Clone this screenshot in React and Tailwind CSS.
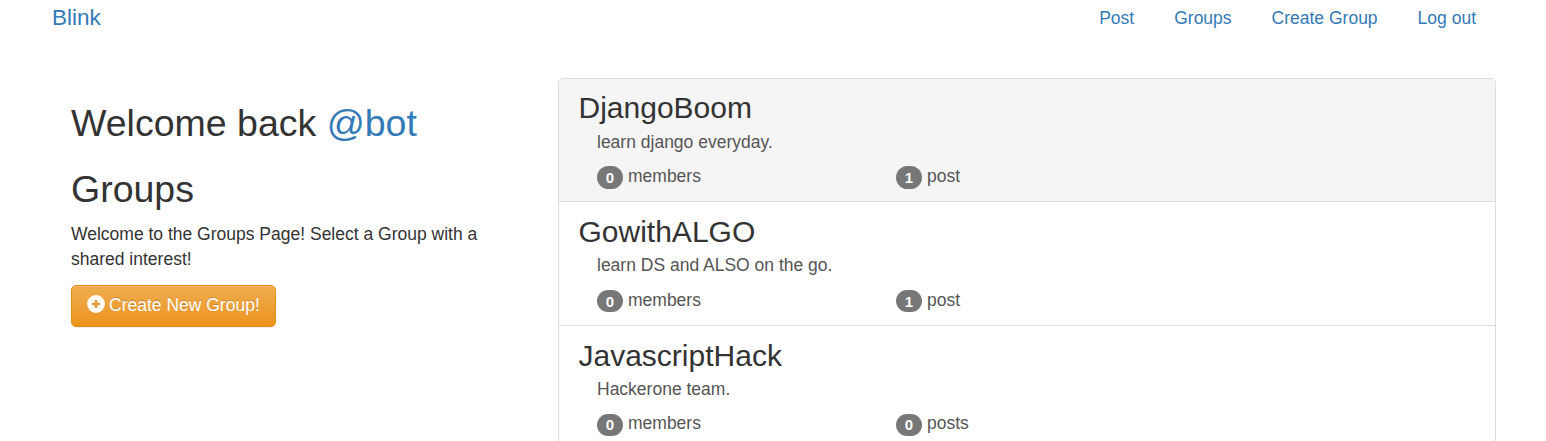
const groups = [
  {
    name: "DjangoBoom", text: "learn django everyday.", members: 0, posts: 1, word: "post",
    box: "h-[123px] bg-[#f5f5f5] pt-[12px]", body: "mt-[6px]", counts: "mt-[10px]", label: "-top-px", badge: "h-[23px]",
  },
  {
    name: "GowithALGO", text: "learn DS and ALSO on the go.", members: 0, posts: 1, word: "post",
    box: "h-[124px] bg-white pt-[13px]", body: "mt-[5px]", counts: "mt-[11px]", label: "-top-px", badge: "h-[22px]",
  },
  {
    name: "JavascriptHack", text: "Hackerone team.", members: 0, posts: 0, word: "posts",
    box: "h-[124px] bg-white pt-[13px]", body: "mt-[5px]", counts: "mt-[11px]", label: "-top-0.5", badge: "h-[22px] pb-px",
  },
];

function Count({ value, label, offset, badge, className = "" }) {
  return (
    <div className={"flex items-start " + className}>
      <span className={"mr-[5px] mt-px inline-flex w-[26px] items-center justify-center rounded-[12px] bg-[#777] text-[15px] font-bold leading-none text-white " + badge}>
        {value}
      </span>
      <span className={"relative leading-[25px] " + offset}>{label}</span>
    </div>
  );
}

function Group({ group }) {
  return (
    <a className={"block border-b border-[#ddd] px-[19.5px] text-[#555] " + group.box}>
      <h3 className="text-[30px] leading-[33px] text-[#333]">{group.name}</h3>
      <div className={"ml-[18.5px] " + group.body}>
        <p className="leading-[25px]">{group.text}</p>
        <div className={"flex h-[25px] " + group.counts}>
          <Count value={group.members} label="members" offset={group.label} badge={group.badge} className="w-[299px]" />
          <Count value={group.posts} label={group.word} offset={group.label} badge={group.badge} />
        </div>
      </div>
    </a>
  );
}

export default function App() {
  return (
    <div className="h-[441px] w-[1546px] overflow-hidden bg-white font-['Liberation_Sans',Arial,sans-serif] text-[17.5px] text-[#333]">
      <nav className="flex h-[78px] items-start justify-between pl-[52px] pr-[70px] text-[#337ab7]">
        <a className="mt-[5px] text-[22.5px] leading-[25px]">Blink</a>
        <div className="mt-[6px] flex gap-[40px] leading-[25px]">
          <a>Post</a>
          <a>Groups</a>
          <a>Create Group</a>
          <a>Log out</a>
        </div>
      </nav>
      <main className="flex pl-[71px]">
        <section className="w-[487px] pt-[25px]">
          <h1 className="text-[37.5px] leading-[41px]">
            Welcome back <a className="text-[#337ab7]">@bot</a>
          </h1>
          <h1 className="mt-[25px] text-[37.5px] leading-[41px]">Groups</h1>
          <p className="mt-[12px] w-[430px] leading-[25px]">
            Welcome to the Groups Page! Select a Group with a shared interest!
          </p>
          <button className="mt-[13px] flex h-[42px] w-[205px] items-center rounded-[5px] border border-[#e38d13] bg-linear-to-b from-[#f0ad4e] to-[#eb9316] pl-[15px] text-white shadow-[inset_0_1px_0_rgba(255,255,255,0.15),0_1px_1px_rgba(0,0,0,0.075)] [text-shadow:0_-1px_0_rgba(0,0,0,0.2)]">
            <svg className="relative -top-0.5 mr-[4px] size-[18px]" viewBox="0 0 18 18">
              <circle cx="9" cy="9" r="8.9" fill="white" />
              <path d="M9 4.9v8.2M4.9 9h8.2" stroke="#e39a35" strokeWidth="2.4" />
            </svg>
            <span className="relative -top-px whitespace-nowrap">Create New Group!</span>
          </button>
        </section>
        <div className="w-[938px] overflow-hidden rounded-t-[5px] border border-[#ddd]">
          {groups.map((g) => (
            <Group key={g.name} group={g} />
          ))}
        </div>
      </main>
    </div>
  );
}
